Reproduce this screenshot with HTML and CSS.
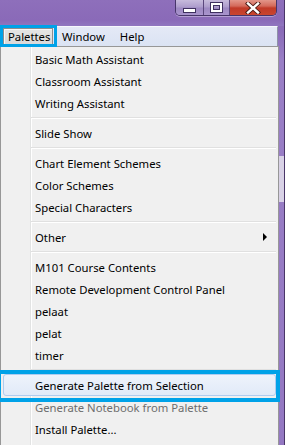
FILE: index.html
```html
<!DOCTYPE html>
<html>
<head>
<meta charset="utf-8">
<link rel="stylesheet" href="styles.css">
</head>
<body>
<div class="window">
  <div class="titlebar">
    <div class="caption">
      <div class="cbtn min"><span class="min-bar"></span></div>
      <div class="cbtn max"><span class="max-box"></span></div>
      <div class="cbtn close">
        <svg width="16" height="12" viewBox="0 0 16 12">
          <path d="M3 1.5 L13 10.5 M13 1.5 L3 10.5" stroke="#4a1a14" stroke-width="4.2" stroke-linecap="square"/>
          <path d="M3 1.5 L13 10.5 M13 1.5 L3 10.5" stroke="#ffffff" stroke-width="2.4" stroke-linecap="square"/>
        </svg>
      </div>
    </div>
  </div>
  <div class="menubar">
    <span class="mb-item pressed">Palettes<span class="mark mark-palettes"></span></span>
    <span class="mb-item">Window</span>
    <span class="mb-item help">Help</span>
  </div>
  <div class="menu">
    <div class="item">Basic Math Assistant</div>
    <div class="item">Classroom Assistant</div>
    <div class="item">Writing Assistant</div>
    <div class="sep"></div>
    <div class="item">Slide Show</div>
    <div class="sep"></div>
    <div class="item">Chart Element Schemes</div>
    <div class="item">Color Schemes</div>
    <div class="item">Special Characters</div>
    <div class="sep"></div>
    <div class="item sub">Other<span class="arrow"></span></div>
    <div class="sep"></div>
    <div class="item">M101 Course Contents</div>
    <div class="item">Remote Development Control Panel</div>
    <div class="item">pelaat</div>
    <div class="item">pelat</div>
    <div class="item">timer</div>
    <div class="sep"></div>
    <div class="item hot">Generate Palette from Selection<span class="mark mark-item"></span></div>
    <div class="item disabled">Generate Notebook from Palette</div>
    <div class="item">Install Palette...</div>
  </div>
</div>
</body>
</html>
```

FILE: styles.css
```css
html, body {
  margin: 0;
  padding: 0;
}
body {
  width: 285px;
  height: 445px;
  overflow: hidden;
  font-family: "Noto Sans", "Open Sans", sans-serif;
  font-size: 11.3px;
}
.window {
  width: 285px;
  height: 445px;
  box-sizing: border-box;
  border-right: 1px solid #4a3668;
  background:
    linear-gradient(to bottom, transparent 0 156px, #d9d2e6 156px 202px, transparent 202px),
    linear-gradient(to bottom, #8c6cb9 0, #8a6bb8 30px, #9a7fc6 60px, #9478c2 445px);
  display: flex;
  flex-direction: column;
}
.titlebar {
  height: 26px;
  flex: none;
  display: flex;
  justify-content: flex-end;
  align-items: flex-start;
  padding-right: 6px;
  background: linear-gradient(to bottom, #8e6fbb, #8a6ab8 20px, #9076bf);
}
.caption {
  display: flex;
  height: 15px;
  margin-right: 1px;
  border: 1px solid #47356a;
  border-top: none;
  border-radius: 0 0 5px 5px;
  overflow: hidden;
  box-shadow: 0 1px 0 rgba(255,255,255,0.35);
}
.cbtn {
  height: 15px;
  display: flex;
  align-items: center;
  justify-content: center;
}
.min, .max {
  width: 27px;
  background: linear-gradient(to bottom, #c7bbdc 0, #ad9ccc 7px, #9d89c2 8px, #a994cd 15px);
  border-right: 1px solid #5b477d;
}
.max { width: 25px; }
.min-bar {
  width: 11px;
  height: 3px;
  margin-top: 5px;
  background: #fff;
  border: 1px solid #3f3060;
}
.max-box {
  width: 7px;
  height: 5px;
  border: 2px solid #fff;
  outline: 1px solid #3f3060;
  outline-offset: 0;
  box-shadow: inset 0 0 0 1px #3f3060;
  margin-top: -1px;
}
.close {
  width: 46px;
  background: linear-gradient(to bottom, #e3968a 0, #d46a5b 6px, #c13a28 8px, #c9452f 15px);
}
.menubar {
  position: relative;
  height: 20px;
  flex: none;
  width: 278px;
  box-sizing: border-box;
  border-top: 1px solid #f6f8fc;
  border-right: 1px solid #8f93a8;
  background: linear-gradient(to bottom, #e4e9f6, #dbe3f3);
  display: flex;
  align-items: center;
  color: #000;
}
.mb-item {
  position: relative;
  padding: 0 6px;
  line-height: 17px;
  height: 17px;
}
.mb-item.pressed {
  margin-left: 3px;
  padding: 0 4px;
  box-sizing: border-box;
  width: 50px;
  border: 1px solid #8d8d8d;
  background: linear-gradient(to bottom, #e5e5e5, #d9d9d9);
  box-shadow: inset 1px 1px 0 #f8f8f8;
  line-height: 15px;
}
.mb-item.pressed + .mb-item { margin-left: 3px; }
.mb-item.help { margin-left: 3px; }
.mark {
  position: absolute;
  border: 3px solid #00a2e8;
  pointer-events: none;
}
.mark-palettes {
  top: -4px;
  left: -4px;
  right: -5px;
  bottom: -3px;
}
.menu {
  flex: 1;
  width: 279px;
  box-sizing: border-box;
  border: 1px solid #979797;
  border-bottom: none;
  padding: 1px 2px;
  background:
    linear-gradient(to right, transparent 29px, #e2e3e3 29px 30px, #ffffff 30px 31px, transparent 31px),
    #f0f0f0;
  color: #000;
}
.item {
  position: relative;
  height: 22px;
  line-height: 23px;
  padding-left: 32px;
  white-space: nowrap;
}
.item.disabled { color: #6d6d6d; }
.item.hot {
  box-sizing: border-box;
  padding-left: 31px;
  line-height: 21px;
  border: 1px solid #aeccf0;
  border-radius: 3px;
  background: linear-gradient(to bottom, #eef3fb, #e1eaf8);
}
.mark-item {
  top: -5px;
  left: -7px;
  right: -5px;
  bottom: -7px;
  border-width: 4px;
}
.sep {
  height: 8px;
  margin-left: 28px;
  background: linear-gradient(to bottom, transparent 3px, #e0e0e0 3px 4px, #ffffff 4px 5px, transparent 5px);
}
.arrow {
  position: absolute;
  right: 9px;
  top: 7px;
  width: 0;
  height: 0;
  border-left: 4px solid #000;
  border-top: 4px solid transparent;
  border-bottom: 4px solid transparent;
}
```
